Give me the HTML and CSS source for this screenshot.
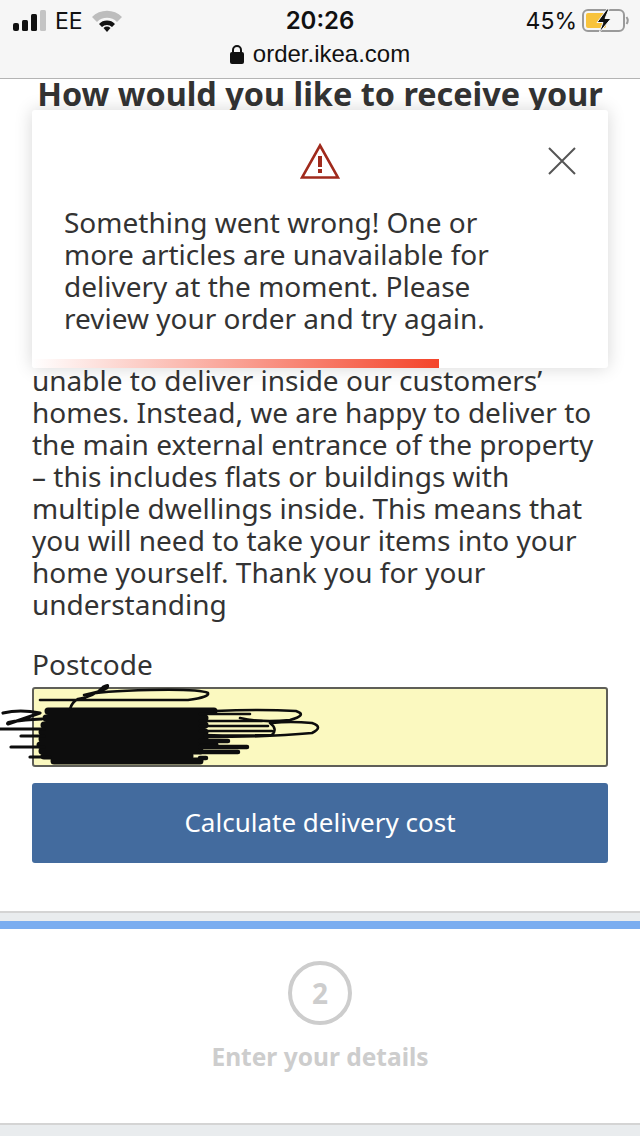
FILE: index.html
```html
<!DOCTYPE html>
<html lang="en">
<head>
    <meta charset="UTF-8">
    <meta name="viewport" content="width=device-width, initial-scale=1.0">
    <title>IKEA order</title>
    <link rel="stylesheet" href="styles.css">
</head>
<body>
    <header class="browser-bar">
        <div class="status-row">
            <div class="status-left">
                <svg class="signal" width="34" height="22" viewBox="0 0 34 22">
                    <rect x="0" y="13" width="6" height="8" rx="2" fill="#111"/>
                    <rect x="9" y="10" width="6" height="11" rx="1.5" fill="#111"/>
                    <rect x="18" y="4" width="6" height="17" rx="1.5" fill="#111"/>
                    <rect x="27" y="0" width="6" height="21" rx="1.5" fill="#c4c4c4"/>
                </svg>
                <span class="carrier">EE</span>
                <svg class="wifi" width="30" height="23" viewBox="0 0 30 23">
                    <path d="M0 8 A21 21 0 0 1 30 8 L25 13 A14 14 0 0 0 5 13 Z" fill="#bdbdbd"/>
                    <path d="M7 15 A11 11 0 0 1 23 15 L20 18 A7 7 0 0 0 10 18 Z" fill="#111"/>
                    <path d="M11.5 19 A5 5 0 0 1 18.5 19 L15 23 Z" fill="#111"/>
                </svg>
            </div>
            <div class="clock">20:26</div>
            <div class="status-right">
                <span class="percent">45%</span>
                <svg class="battery" width="48" height="24" viewBox="0 0 48 24">
                    <rect x="1" y="1" width="41" height="21" rx="5" fill="none" stroke="#9a9a9a" stroke-width="2"/>
                    <rect x="4" y="4" width="20" height="15" rx="2" fill="#f8c33c"/>
                    <path d="M44.5 8 q2.5 3.5 0 7" fill="none" stroke="#9a9a9a" stroke-width="2"/>
                    <path d="M25 0 L15 13.5 H21 L17 24 L29 9.5 H23 L27 0 Z" fill="#111" stroke="#f6f6f6" stroke-width="1"/>
                </svg>
            </div>
        </div>
        <div class="address-row">
            <svg class="lock" width="14" height="19" viewBox="0 0 14 19">
                <path d="M3 8 V5 a4 4 0 0 1 8 0 V8" fill="none" stroke="#111" stroke-width="2"/>
                <rect x="0" y="7" width="14" height="12" rx="2" fill="#111"/>
            </svg>
            <span>order.ikea.com</span>
        </div>
    </header>

    <main class="delivery-step">
        <h1>How would you like to receive your</h1>
        <p class="notice">unable to deliver inside our customers’ homes. Instead, we are happy to deliver to the main external entrance of the property – this includes flats or buildings with multiple dwellings inside. This means that you will need to take your items into your home yourself. Thank you for your understanding</p>

        <label class="field-label" for="postcode">Postcode</label>
        <div class="postcode-wrap">
            <input id="postcode" class="postcode" type="text">
            <svg class="scribble" width="330" height="90" viewBox="0 0 330 90">
                <g fill="none" stroke="#0d0d0d" stroke-linecap="round" stroke-linejoin="round">
                    <!-- solid part of the scribble -->
                    <path d="M48 26 H214 M46 33 H205 M44 40 H205 M42 47 H205 M42 54 H205 M40 60 H215 M42 66 H200 M44 71 H190 M54 76 H200" stroke-width="7"/>
                    <path d="M200 29 H250 M200 36 H262 M200 41 H268 M200 46 H272" stroke-width="2.6"/>
                    <path d="M200 56 H228 M200 62 H247 M200 67 H238 M200 73 H206" stroke-width="4.5"/>
                    <!-- loose loops -->
                    <path d="M40 15 H188 Q210 12 208 8 Q200 4 150 5 Q100 6 84 10 Q100 7 107 3 Q110 -2 103 2 Q94 12 78 14 Q72 17 70 24" stroke-width="2.6"/>
                    <path d="M215 26 Q260 24 296 26 Q308 30 290 35 Q262 38 240 33" stroke-width="2.6"/>
                    <path d="M205 50 Q240 51 272 50 Q278 44 270 38 M205 52 Q270 52 312 48 Q324 42 312 38 Q290 36 272 38" stroke-width="2.6"/>
                    <path d="M3 28 Q20 24 40 28 L8 39 Q4 36 42 34 M0 44 H44 M21 51 H44 M11 62 H44 M30 72 H50" stroke-width="3.2"/>
                </g>
            </svg>
        </div>
        <button class="calc-btn" type="button">Calculate delivery cost</button>
    </main>

    <section class="next-step">
        <div class="step-number">2</div>
        <h2>Enter your details</h2>
    </section>

    <div class="toast">
        <div class="toast-head">
            <svg class="warn-icon" width="40" height="36" viewBox="0 0 40 36">
                <path d="M20 2.5 L38 34.5 H2 Z" fill="none" stroke="#a02a1c" stroke-width="2.6"/>
                <rect x="18" y="13" width="4" height="11" fill="#a02a1c"/>
                <rect x="18" y="26" width="4" height="4" fill="#a02a1c"/>
            </svg>
            <svg class="close-icon" width="28" height="28" viewBox="0 0 28 28">
                <path d="M1 1 L27 27 M27 1 L1 27" stroke="#555" stroke-width="2" fill="none"/>
            </svg>
        </div>
        <p>Something went wrong! One or more articles are unavailable for delivery at the moment. Please review your order and try again.</p>
        <div class="toast-timer"></div>
    </div>
</body>
</html>
```

FILE: styles.css
```css
* {
    box-sizing: border-box;
}
html, body {
    height: 1136px;
}
body {
    position: relative;
    margin: 0;
    display: flex;
    flex-direction: column;
    overflow: hidden;
    background: #e9ecee;
    color: #333;
    font-family: "Noto Sans", sans-serif;
}
.browser-bar {
    height: 79px;
    flex: none;
    background: #f6f6f6;
    border-bottom: 1px solid #b4b4b4;
    font-family: Inter, "Liberation Sans", sans-serif;
    color: #111;
}
.status-row {
    height: 41px;
    padding: 0 10px 0 13px;
    display: grid;
    grid-template-columns: 1fr auto 1fr;
    align-items: center;
}
.status-left {
    display: flex;
    align-items: center;
}
.carrier {
    margin-left: 8px;
    font-size: 23px;
}
.wifi {
    margin-left: 9px;
}
.clock {
    margin-left: -3px;
    font-size: 24px;
    font-weight: 600;
}
.status-right {
    display: flex;
    align-items: center;
    justify-content: flex-end;
    gap: 5px;
}
.percent {
    font-size: 23px;
}
.address-row {
    height: 26px;
    display: flex;
    align-items: center;
    justify-content: center;
    gap: 9px;
    font-family: "Liberation Sans", sans-serif;
    font-size: 24px;
}
.delivery-step {
    flex: none;
    height: 834px;
    padding: 0 32px;
    display: flex;
    flex-direction: column;
    background: white;
    border-bottom: 2px solid #d4d4d4;
}
h1 {
    margin: 0;
    font-size: 32.4px;
    line-height: 28px;
    font-weight: 700;
    white-space: nowrap;
    text-align: center;
}
.notice {
    /* the rest of the copy sits behind the toast */
    margin: 257px 0 0;
    font-size: 28px;
    line-height: 32px;
}
.field-label {
    margin-top: 28px;
    font-size: 28px;
    line-height: 32px;
}
.postcode-wrap {
    position: relative;
    margin-top: 7px;
}
.postcode {
    display: block;
    width: 100%;
    height: 80px;
    background: #fbf9c0;
    border: 2px solid #5f5f58;
    border-radius: 3px;
}
.scribble {
    position: absolute;
    left: -32px;
    top: -2px;
    overflow: visible;
}
.calc-btn {
    margin-top: 16px;
    height: 80px;
    padding: 0 0 2px;
    border: 0;
    border-radius: 3px;
    background: #436b9e;
    color: white;
    font-family: "Noto Sans", sans-serif;
    font-size: 26px;
}
.next-step {
    margin-top: 8px;
    flex: none;
    height: 204px;
    padding-top: 32px;
    background: white;
    border-top: 8px solid #7aadf0;
    border-bottom: 2px solid #d4d4d4;
    display: flex;
    flex-direction: column;
    align-items: center;
    color: #cdcdcd;
}
.step-number {
    width: 64px;
    height: 64px;
    border: 4px solid #cdcdcd;
    border-radius: 50%;
    display: flex;
    align-items: center;
    justify-content: center;
    font-size: 28px;
    font-weight: 700;
}
h2 {
    margin: 15px 0 0;
    font-size: 24.5px;
    line-height: 34px;
    font-weight: 700;
}
.toast {
    position: absolute;
    left: 32px;
    top: 110px;
    width: 576px;
    height: 258px;
    padding: 33px 28px 0 32px;
    background: white;
    border-radius: 3px;
    box-shadow: 0 0 18px rgba(0, 0, 0, 0.16);
    overflow: hidden;
}
.toast-head {
    position: relative;
    height: 63px;
    display: flex;
    justify-content: center;
}
.warn-icon {
    margin-left: -4px;
}
.close-icon {
    position: absolute;
    right: 4px;
    top: 4px;
}
.toast p {
    margin: 0;
    max-width: 440px;
    font-size: 28px;
    line-height: 32px;
}
.toast-timer {
    position: absolute;
    left: 0;
    bottom: 0;
    width: 407px;
    height: 9px;
    background: linear-gradient(to right, white, #f4442a);
}
```
